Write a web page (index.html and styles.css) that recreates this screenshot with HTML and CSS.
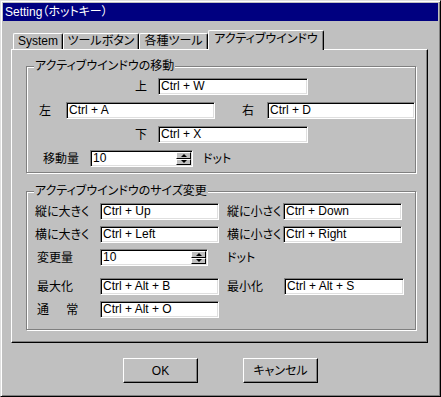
FILE: index.html
```html
<!DOCTYPE html>
<html lang="ja">
<head>
  <meta charset="UTF-8" />
  <title>Setting（ホットキー）</title>
  <link rel="stylesheet" href="styles.css">
</head>
<body>
  <div class="window">
    <div class="titlebar">Setting（ホットキー）</div>

    <div class="tabs">
      <div class="tab t-system">System</div>
      <div class="tab t-button">ツールボタン</div>
      <div class="tab t-tools">各種ツール</div>
      <div class="tab active t-window">アクティブウインドウ</div>
    </div>

    <div class="panel">
      <fieldset class="group group-move">
        <legend>アクティブウインドウの移動</legend>
        <div class="row">
          <span class="lbl l-center">上</span>
          <div class="field f-center">Ctrl + W</div>
        </div>
        <div class="row">
          <span class="lbl l-left">左</span>
          <div class="field f-side">Ctrl + A</div>
          <span class="lbl l-right">右</span>
          <div class="field f-side2">Ctrl + D</div>
        </div>
        <div class="row">
          <span class="lbl l-center">下</span>
          <div class="field f-center">Ctrl + X</div>
        </div>
        <div class="row">
          <span class="lbl l-amount">移動量</span>
          <div class="field spin f-amount">
            <span class="val">10</span>
            <div class="spinner"><div class="sbtn up"></div><div class="sbtn down"></div></div>
          </div>
          <span class="unit u-move">ドット</span>
        </div>
      </fieldset>

      <fieldset class="group group-size">
        <legend>アクティブウインドウのサイズ変更</legend>
        <div class="row">
          <span class="lbl l-size">縦に大きく</span>
          <div class="field f-size">Ctrl + Up</div>
          <span class="lbl l-size2">縦に小さく</span>
          <div class="field f-size">Ctrl + Down</div>
        </div>
        <div class="row">
          <span class="lbl l-size">横に大きく</span>
          <div class="field f-size">Ctrl + Left</div>
          <span class="lbl l-size2">横に小さく</span>
          <div class="field f-size">Ctrl + Right</div>
        </div>
        <div class="row">
          <span class="lbl l-size l-pad">変更量</span>
          <div class="field spin f-change">
            <span class="val">10</span>
            <div class="spinner"><div class="sbtn up"></div><div class="sbtn down"></div></div>
          </div>
          <span class="unit u-size">ドット</span>
        </div>
        <div class="row row-gap">
          <span class="lbl l-size l-pad">最大化</span>
          <div class="field f-size">Ctrl + Alt + B</div>
          <span class="lbl l-size3">最小化</span>
          <div class="field f-min">Ctrl + Alt + S</div>
        </div>
        <div class="row">
          <span class="lbl l-size l-pad spaced">通 常</span>
          <div class="field f-size">Ctrl + Alt + O</div>
        </div>
      </fieldset>
    </div>

    <div class="buttons">
      <button class="btn">OK</button>
      <button class="btn">キャンセル</button>
    </div>
  </div>
</body>
</html>
```

FILE: styles.css
```css
* {
  box-sizing: border-box;
}

body {
  margin: 0;
  font-family: "Liberation Sans", "Noto Sans CJK JP", sans-serif;
  font-size: 12px;
  line-height: 14px;
  font-feature-settings: "palt";
  color: #000;
  background: #c0c0c0;
}

.window {
  width: 441px;
  height: 397px;
  padding: 2px;
  background: #c0c0c0;
  border-top: 1px solid #dfdfdf;
  border-left: 1px solid #dfdfdf;
  border-right: 1px solid #000;
  border-bottom: 1px solid #000;
  box-shadow: inset 1px 1px 0 #fff, inset -1px -1px 0 #808080;
}

.titlebar {
  height: 18px;
  line-height: 18px;
  padding-left: 2px;
  background: #000080;
  color: #fff;
}

/* tab strip */
.tabs {
  display: flex;
  align-items: flex-end;
  height: 19px;
  margin: 9px 0 0 8px;
  padding-left: 2px;
}

.tab {
  height: 16px;
  line-height: 15px;
  text-align: center;
  white-space: nowrap;
  border-top: 1px solid #fff;
  border-left: 1px solid #fff;
  border-right: 1px solid #000;
  border-radius: 2px 2px 0 0;
  box-shadow: inset -1px 0 0 #808080;
  background: #c0c0c0;
}

.tab.active {
  height: 20px;
  margin-bottom: -1px;
  line-height: 17px;
  position: relative;
  z-index: 1;
}

.t-system { width: 50px; }
.t-button { width: 76px; }
.t-tools { width: 69px; }
.t-window { width: 116px; }

.panel {
  width: 417px;
  height: 294px;
  margin-left: 8px;
  border-top: 1px solid #fff;
  border-left: 1px solid #fff;
  border-right: 1px solid #000;
  border-bottom: 1px solid #000;
  box-shadow: inset -1px -1px 0 #808080;
  padding-top: 10px;
}

/* group boxes */
.group {
  width: 390px;
  margin: 0 0 0 14px;
  padding: 5px 0 5px 0;
  border: 1px solid #808080;
  box-shadow: inset 1px 1px 0 #fff, 1px 1px 0 #fff;
  min-inline-size: 0;
}

.group legend {
  margin-left: 7px;
  padding: 0 1px;
  background: #c0c0c0;
  line-height: 13px;
}

.group-size {
  margin-top: 12px;
  padding-bottom: 11px;
}

.row {
  display: flex;
  align-items: center;
  height: 17px;
}

.group-move .row + .row { margin-top: 7px; }
.group-size .row + .row { margin-top: 6px; }
.group-size .row-gap { margin-top: 12px !important; }

.lbl {
  flex: none;
  white-space: nowrap;
}

.l-center { width: 120px; text-align: right; margin-right: 11px; }
.l-left { width: 39px; padding-left: 12px; }
.l-right { width: 52px; padding-left: 27px; }
.l-amount { width: 63px; padding-left: 16px; }

.l-size { width: 73px; padding-left: 8px; }
.l-pad { padding-left: 10px; }
.l-size2 { width: 64px; padding-left: 8px; }
.l-size3 { width: 65px; padding-left: 8px; }
.spaced { letter-spacing: 7px; }

.unit { flex: none; }
.u-move { margin-left: 10px; }
.u-size { margin-left: 19px; }

/* edit boxes */
.field {
  flex: none;
  height: 17px;
  line-height: 15px;
  padding-left: 2px;
  background: #fff;
  border-top: 1px solid #808080;
  border-left: 1px solid #808080;
  border-right: 1px solid #fff;
  border-bottom: 1px solid #fff;
  box-shadow: inset 1px 1px 0 #000, inset -1px -1px 0 #dfdfdf;
  white-space: nowrap;
  overflow: hidden;
}

.f-center { width: 150px; }
.f-side { width: 149px; }
.f-side2 { width: 148px; }
.f-amount { width: 103px; }
.f-size { width: 119px; }
.f-change { width: 108px; }
.f-min { width: 120px; }

.spin {
  display: flex;
  padding: 1px;
}

.spin .val {
  flex: 1;
  padding-left: 1px;
  line-height: 13px;
}

.spinner {
  width: 15px;
  display: flex;
  flex-direction: column;
}

.sbtn {
  flex: 1;
  display: flex;
  align-items: center;
  justify-content: center;
  background: #c0c0c0;
  border-top: 1px solid #fff;
  border-left: 1px solid #fff;
  border-right: 1px solid #000;
  border-bottom: 1px solid #000;
}

.sbtn::after {
  content: "";
  border-left: 3px solid transparent;
  border-right: 3px solid transparent;
}

.sbtn.up::after { border-bottom: 3px solid #000; }
.sbtn.down::after { border-top: 3px solid #000; }

/* dialog buttons */
.buttons {
  display: flex;
  gap: 45px;
  margin: 15px 0 0 120px;
}

.btn {
  width: 75px;
  height: 25px;
  padding: 0;
  font: inherit;
  color: #000;
  background: #c0c0c0;
  border-top: 1px solid #fff;
  border-left: 1px solid #fff;
  border-right: 1px solid #000;
  border-bottom: 1px solid #000;
  box-shadow: inset -1px -1px 0 #808080;
}
```
